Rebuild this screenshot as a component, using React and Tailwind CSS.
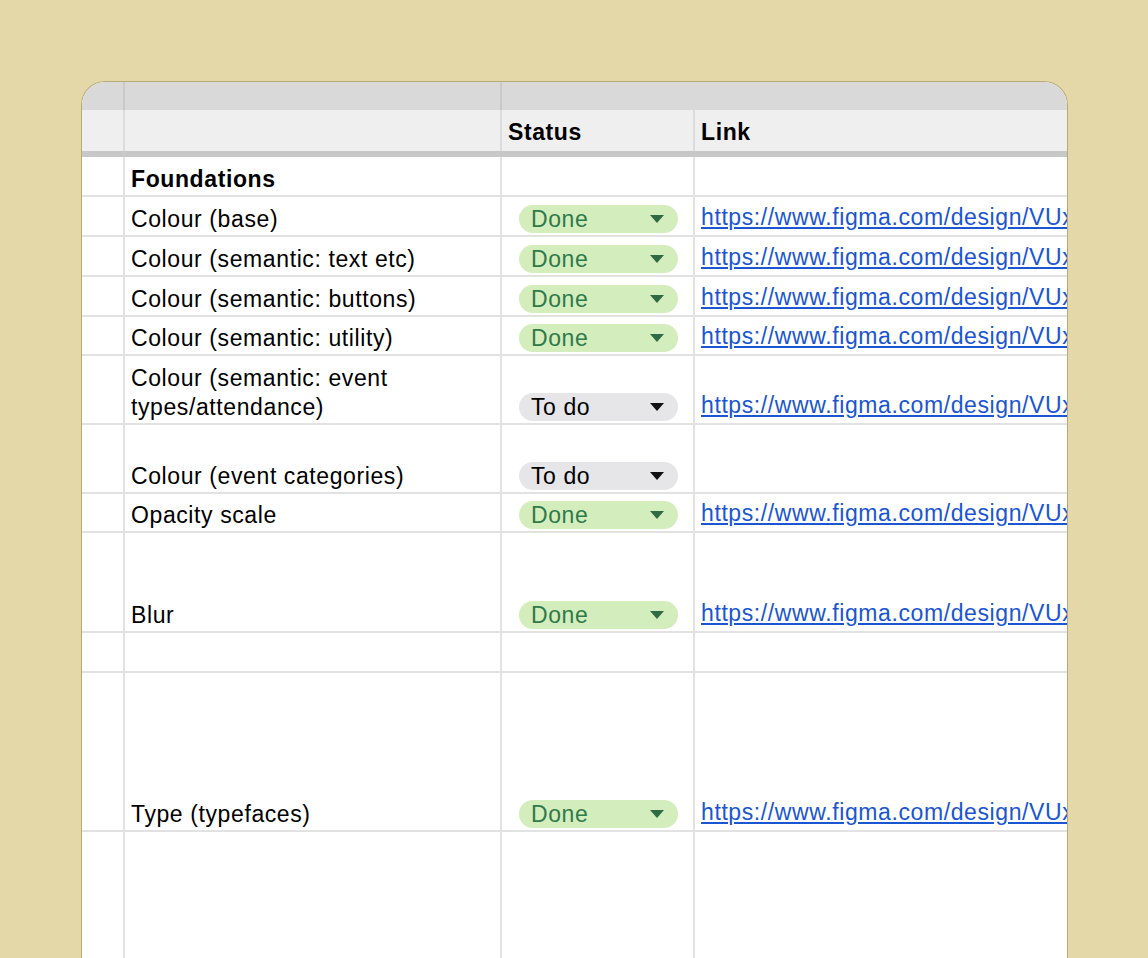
import React from "react";

const LINK = "https://www.figma.com/design/VUxR8kq2mPz";

const rows = [
  { h: 40, label: "Foundations", bold: true },
  { h: 40, label: "Colour (base)", status: "Done", link: true },
  { h: 40, label: "Colour (semantic: text etc)", status: "Done", link: true },
  { h: 40, label: "Colour (semantic: buttons)", status: "Done", link: true },
  { h: 39, label: "Colour (semantic: utility)", status: "Done", link: true },
  { h: 69, label: "Colour (semantic: event types/attendance)", status: "To do", link: true },
  { h: 69, label: "Colour (event categories)", status: "To do" },
  { h: 39, label: "Opacity scale", status: "Done", link: true },
  { h: 100, label: "Blur", status: "Done", link: true },
  { h: 40, label: "" },
  { h: 159, label: "Type (typefaces)", status: "Done", link: true },
  { h: 140, label: "" },
];

function Chip({ status }) {
  const done = status === "Done";
  return (
    <div
      className={`mb-[2px] flex h-[28px] w-[159px] items-center justify-between rounded-full pl-[12px] pr-[14px] ${
        done ? "bg-[#d4edbc] text-[#2f7a4a]" : "bg-[#e6e6e9] text-black"
      }`}
    >
      <span>{status}</span>
      <svg width="14" height="8" viewBox="0 0 14 8">
        <path d="M0 0 L14 0 L7 8 Z" fill={done ? "#2f6b45" : "#111"} />
      </svg>
    </div>
  );
}

export default function App() {
  return (
    <div className="h-[958px] overflow-hidden bg-[#e4d8a8] pl-[81px] pt-[81px]" style={{ fontFamily: '"Liberation Sans", Arial, sans-serif' }}>
      <div className="h-[900px] w-[987px] overflow-hidden rounded-t-[24px] border border-b-0 border-[#b8aa78] bg-white text-[23px] tracking-[0.6px] text-black">
        <div className="flex h-[28px] bg-[#d9d9d9]">
          <div className="w-[43px] border-r-2 border-[#c9c9c9]" />
          <div className="w-[377px] border-r-2 border-[#c9c9c9]" />
          <div className="flex-1" />
        </div>
        <div className="flex h-[41px] bg-[#efefef]">
          <div className="w-[43px] border-r-2 border-[#dcdcdc]" />
          <div className="w-[377px] border-r-2 border-[#dcdcdc]" />
          <div className="flex w-[193px] items-end border-r-2 border-[#dcdcdc] pb-[2px] pl-[6px] font-bold">Status</div>
          <div className="flex flex-1 items-end pb-[2px] pl-[6px] font-bold">Link</div>
        </div>
        <div className="h-[6px] bg-[#c7c7c7]" />
        {rows.map((r, i) => (
          <div key={i} className="flex border-b-2 border-[#e2e2e2]" style={{ height: r.h }}>
            <div className="w-[43px] border-r-2 border-[#e2e2e2]" />
            <div className={`flex w-[377px] items-end border-r-2 border-[#e2e2e2] pb-[1px] pl-[6px] leading-[29px] ${r.bold ? "font-bold" : ""}`}>
              <span className="w-[300px]">{r.label}</span>
            </div>
            <div className="flex w-[193px] items-end border-r-2 border-[#e2e2e2] pl-[17px]">
              {r.status && <Chip status={r.status} />}
            </div>
            <div className="flex min-w-0 flex-1 items-end overflow-hidden whitespace-nowrap pb-[1px] pl-[6px]">
              {r.link && <span className="text-[#1a55d2] underline">{LINK}</span>}
            </div>
          </div>
        ))}
      </div>
    </div>
  );
}
